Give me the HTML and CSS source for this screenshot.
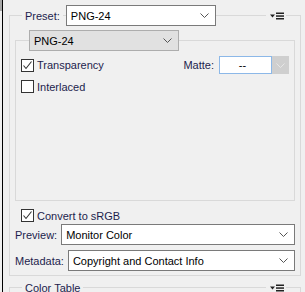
FILE: index.html
```html
<!DOCTYPE html>
<html>
<head>
<meta charset="utf-8">
<link rel="stylesheet" href="styles.css">
</head>
<body>
<div class="corner"></div>
<div class="frame">
  <div class="group outer">
    <div class="head">
      <span class="label mask">Preset:</span>
      <div class="sel white preset"><span>PNG-24</span><svg class="chev" width="9" height="5" viewBox="0 0 9 5"><path d="M0.5 0.5L4.5 4.5L8.5 0.5" fill="none" stroke="#555" stroke-width="1"/></svg></div>
    </div>
    <div class="menu"><svg width="16" height="8" viewBox="0 0 16 8"><path d="M2 2.5h5l-2.5 3z" fill="#222"/><rect x="8" y="0.5" width="8" height="1.5" fill="#222"/><rect x="8" y="3.3" width="8" height="1.5" fill="#222"/><rect x="8" y="6" width="8" height="1.5" fill="#222"/></svg></div>

    <div class="group inner">
      <div class="head inner-head">
        <div class="sel gray format"><span>PNG-24</span><svg class="chev" width="9" height="5" viewBox="0 0 9 5"><path d="M0.5 0.5L4.5 4.5L8.5 0.5" fill="none" stroke="#555" stroke-width="1"/></svg></div>
      </div>
      <div class="row opt first">
        <label class="check"><span class="box"><svg width="11" height="11" viewBox="0 0 11 11"><path d="M1.5 5.5L4 8.5L9.5 1.5" fill="none" stroke="#333" stroke-width="1.1"/></svg></span><span class="label">Transparency</span></label>
        <div class="matte">
          <span class="label">Matte:</span>
          <div class="matte-box"><span class="matte-val">--</span><span class="matte-drop"><svg width="9" height="5" viewBox="0 0 9 5"><path d="M0.5 0.5L4.5 4.5L8.5 0.5" fill="none" stroke="#e6e6e6" stroke-width="1"/></svg></span></div>
        </div>
      </div>
      <div class="row opt second">
        <label class="check"><span class="box"></span><span class="label">Interlaced</span></label>
      </div>
    </div>

    <div class="row convert">
      <label class="check"><span class="box"><svg width="11" height="11" viewBox="0 0 11 11"><path d="M1.5 5.5L4 8.5L9.5 1.5" fill="none" stroke="#333" stroke-width="1.1"/></svg></span><span class="label">Convert to sRGB</span></label>
    </div>
    <div class="row field preview">
      <span class="label">Preview:</span>
      <div class="sel white grow"><span>Monitor Color</span><svg class="chev" width="9" height="5" viewBox="0 0 9 5"><path d="M0.5 0.5L4.5 4.5L8.5 0.5" fill="none" stroke="#555" stroke-width="1"/></svg></div>
    </div>
    <div class="row field metadata">
      <span class="label">Metadata:</span>
      <div class="sel white grow"><span>Copyright and Contact Info</span><svg class="chev" width="9" height="5" viewBox="0 0 9 5"><path d="M0.5 0.5L4.5 4.5L8.5 0.5" fill="none" stroke="#555" stroke-width="1"/></svg></div>
    </div>
  </div>

  <div class="group colortable">
    <div class="head">
      <span class="label mask">Color Table</span>
    </div>
    <div class="menu"><svg width="16" height="8" viewBox="0 0 16 8"><path d="M2 2.5h5l-2.5 3z" fill="#222"/><rect x="8" y="0.5" width="8" height="1.5" fill="#222"/><rect x="8" y="3.3" width="8" height="1.5" fill="#222"/><rect x="8" y="6" width="8" height="1.5" fill="#222"/></svg></div>
  </div>
</div>
</body>
</html>
```

FILE: styles.css
```css
html, body {
  margin: 0;
  padding: 0;
  background: #f0f0f0;
  overflow: hidden;
}
body {
  width: 305px;
  height: 292px;
  padding-left: 2px;
  box-sizing: border-box;
  font-family: "Liberation Sans", Arial, sans-serif;
  font-size: 11px;
  color: #000;
  position: relative;
}
.corner {
  position: absolute;
  left: 0;
  top: 0;
  width: 2px;
  height: 11px;
  background: #a8a8a8;
}
.frame {
  border-left: 1px solid #000;
  height: 292px;
  padding-left: 6px;
  padding-top: 15px;
  box-sizing: border-box;
}
.group {
  border: 1px solid #d9d9d9;
  box-sizing: border-box;
  position: relative;
}
.outer {
  width: 292px;
  height: 261px;
}
.head {
  display: flex;
  align-items: center;
  height: 21px;
  margin-top: -11px;
  padding-left: 12px;
}
.label {
  color: #1d1d4d;
  white-space: nowrap;
}
.mask {
  background: #f0f0f0;
  padding: 0 3px;
}
.sel {
  height: 21px;
  box-sizing: border-box;
  display: flex;
  align-items: center;
  justify-content: space-between;
  padding: 0 6px 0 4px;
  white-space: nowrap;
}
.sel.white {
  background: #fff;
  border: 1px solid #7a7a7a;
}
.sel.gray {
  background: #e1e1e1;
  border: 1px solid #adadad;
}
.preset {
  width: 150px;
  margin-left: 3px;
}
.format {
  width: 150px;
}
.menu {
  position: absolute;
  top: -5px;
  right: 14px;
  background: #f0f0f0;
  padding: 0 2px;
  height: 9px;
  display: flex;
  align-items: center;
}
.inner {
  margin: 14px 5px 0 5px;
  height: 161px;
}
.inner-head {
  margin-top: -11px;
  padding-left: 13px;
}
.row {
  display: flex;
  align-items: center;
}
.opt {
  padding: 0 5px;
}
.opt.first {
  margin-top: 5px;
  height: 18px;
  justify-content: space-between;
}
.opt.second {
  margin-top: 6px;
  height: 13px;
}
.check {
  display: flex;
  align-items: center;
}
.box {
  width: 13px;
  height: 13px;
  box-sizing: border-box;
  border: 1px solid #333;
  background: #fff;
  display: flex;
  align-items: center;
  justify-content: center;
  margin-right: 3px;
}
.box svg {
  display: block;
}
.matte {
  display: flex;
  align-items: center;
}
.matte-box {
  display: flex;
  margin-left: 5px;
  width: 70px;
  height: 18px;
}
.matte-val {
  flex: 1;
  background: #fff;
  border: 1px solid #8cb8e8;
  display: flex;
  align-items: center;
  justify-content: center;
  padding-right: 6px;
}
.matte-drop {
  width: 17px;
  background: #cfcfcf;
  display: flex;
  align-items: center;
  justify-content: center;
}
.convert {
  margin-top: 8px;
  padding-left: 11px;
  height: 13px;
}
.field {
  padding: 0 5px;
  height: 21px;
}
.field .label {
  margin-right: 4px;
}
.preview {
  margin-top: 2px;
}
.metadata {
  margin-top: 5px;
}
.grow {
  flex: 1;
}
.colortable {
  margin-top: 11px;
  width: 292px;
  height: 5px;
  border-bottom: none;
}
.colortable .head {
  margin-top: -11px;
}
```
